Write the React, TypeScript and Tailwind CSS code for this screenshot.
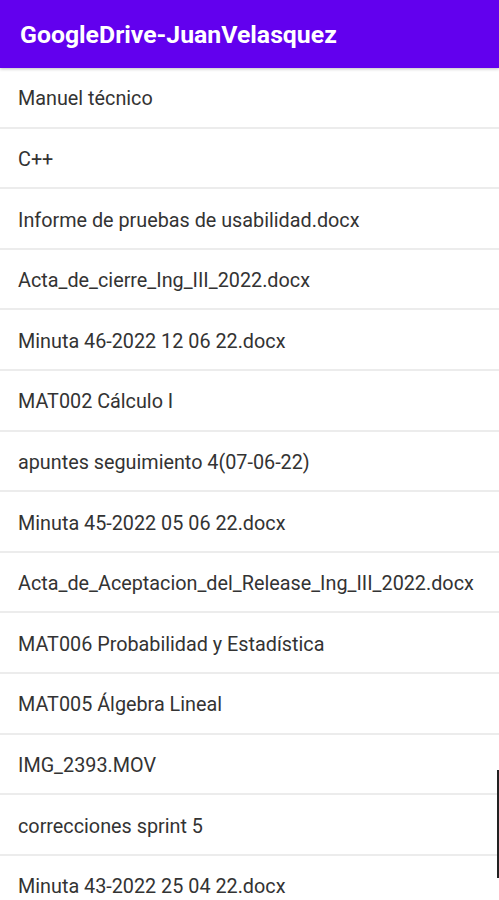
import React from "react";

const items = [
  "Manuel técnico",
  "C++",
  "Informe de pruebas de usabilidad.docx",
  "Acta_de_cierre_Ing_III_2022.docx",
  "Minuta 46-2022 12 06 22.docx",
  "MAT002 Cálculo I",
  "apuntes seguimiento 4(07-06-22)",
  "Minuta 45-2022 05 06 22.docx",
  "Acta_de_Aceptacion_del_Release_Ing_III_2022.docx",
  "MAT006 Probabilidad y Estadística",
  "MAT005 Álgebra Lineal",
  "IMG_2393.MOV",
  "correcciones sprint 5",
  "Minuta 43-2022 25 04 22.docx",
];

export default function App() {
  return (
    <div
      className="relative w-[499px] h-[900px] overflow-hidden bg-white"
      style={{ fontFamily: "Roboto, 'Liberation Sans', sans-serif" }}
    >
      <div className="h-[68px] bg-[#6200ee] flex items-center pl-5 pt-[2px] shadow-[0_1px_3px_rgba(0,0,0,0.25)] relative z-10">
        <span className="text-white font-bold text-[24.8px]">GoogleDrive-JuanVelasquez</span>
      </div>
      <div className="flex flex-col">
        {items.map((t) => (
          <div
            key={t}
            className="h-[60.6px] shrink-0 flex items-center pl-[18px] pt-[4px] border-b-2 border-[#ececec] text-[19.8px] text-[#333333]"
          >
            {t}
          </div>
        ))}
      </div>
      <div className="absolute right-0 top-[770px] w-[2px] h-[108px] bg-[#222]" />
    </div>
  );
}
